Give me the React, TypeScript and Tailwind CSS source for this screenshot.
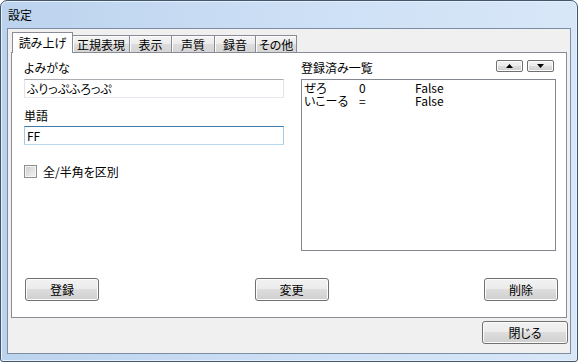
import React from 'react';

const font = { fontFamily: '"Noto Sans CJK JP", "Noto Sans", sans-serif' };

const Btn: React.FC<{ label: string; className?: string }> = ({ label, className = '' }) => (
  <div
    className={`flex h-[23px] items-center justify-center rounded-[3px] border border-[#707070] bg-[linear-gradient(to_bottom,#f2f2f2_0%,#ebebeb_50%,#dddddd_50%,#cfcfcf_100%)] text-[12px] leading-none text-black shadow-[inset_0_0_0_1px_#fcfcfc] ${className}`}
  >
    {label}
  </div>
);

const ArrowBtn: React.FC<{ up?: boolean }> = ({ up }) => (
  <div className="flex h-[12px] w-[27px] items-center justify-center rounded-[2px] border border-[#707070] bg-[linear-gradient(to_bottom,#f2f2f2_0%,#ebebeb_50%,#dddddd_50%,#cfcfcf_100%)] shadow-[inset_0_0_0_1px_#fcfcfc]">
    <svg width="7" height="4" viewBox="0 0 7 4">
      {up ? <polygon points="3.5,0 7,4 0,4" fill="#000" /> : <polygon points="0,0 7,0 3.5,4" fill="#000" />}
    </svg>
  </div>
);

const tabs = [
  { label: '正規表現', w: 'w-[57px]' },
  { label: '表示', w: 'w-[42px]' },
  { label: '声質', w: 'w-[43px]' },
  { label: '録音', w: 'w-[41px]' },
  { label: 'その他', w: 'w-[41px]' },
];

const rows = [
  ['ぜろ', '0', 'False'],
  ['いこーる', '=', 'False'],
];

export default function App() {
  return (
    <div className="h-[362px] w-[578px] bg-white text-black [font-feature-settings:'palt']" style={font}>
      <div className="flex h-[362px] w-[578px] flex-col rounded-t-[7px] rounded-b-[3px] border border-[#44566d] bg-[linear-gradient(to_right,#bcd3ee,#cfe1f6_60%,#d8e7f8)] shadow-[inset_0_0_0_1px_#e6f0fb]">
        {/* Title bar */}
        <div className="flex h-[27px] items-center pl-[7px] text-[12px] leading-none">設定</div>

        {/* Client */}
        <div className="mx-[6px] mb-[7px] flex flex-1 flex-col border border-[#7d8ea3] bg-[#f0f0f0] pt-[3px] pb-[9px]">
          {/* Tab strip */}
          <div className="relative z-10 ml-[4px] flex h-[20px] items-end">
            <div className="mb-[-1px] flex h-[21px] w-[61px] items-start justify-center border-x border-t border-[#898c95] bg-white pt-[4px] text-[12px] leading-none">
              読み上げ
            </div>
            {tabs.map(t => (
              <div
                key={t.label}
                className={`flex h-[17px] ${t.w} items-center justify-center border-t border-r border-[#898c95] bg-[linear-gradient(to_bottom,#f5f5f5_0%,#ebebeb_50%,#dddddd_50%,#d5d5d5_100%)] pt-[1px] text-[12px] leading-none shadow-[inset_1px_1px_0_#fcfcfc]`}
              >
                {t.label}
              </div>
            ))}
          </div>

          {/* Tab panel */}
          <div className="mx-[3px] flex h-[266px] flex-col border border-[#898c95] bg-white pt-[7px] pb-[16px]">
            <div className="flex flex-1 pl-[12px] pr-[10px]">
              {/* Left column */}
              <div className="flex w-[260px] flex-col">
                <div className="h-[16px] text-[12px] leading-[16px]">よみがな</div>
                <div className="mt-[3px] flex h-[19px] items-center border border-[#abadb3] border-x-[#e2e3ea] border-b-[#e3e9ef] pl-[2px] text-[12px] leading-none">
                  ふりっぷふろっぷ
                </div>
                <div className="mt-[10px] h-[16px] text-[12px] leading-[16px]">単語</div>
                <div className="mt-[2px] flex h-[19px] items-center border border-[#3d7bad] border-x-[#a4c9e3] border-b-[#b7d9ed] pl-[2px] text-[12px] leading-none">
                  FF
                </div>
                <div className="mt-[20px] flex items-center gap-[6px]">
                  <div className="h-[13px] w-[13px] border border-[#8e8f8f] bg-[linear-gradient(135deg,#cbcbcb,#f6f6f6)] shadow-[inset_0_0_0_1px_#f4f4f4]" />
                  <span className="text-[12px] leading-none">全/半角を区別</span>
                </div>
              </div>

              {/* Right column */}
              <div className="ml-[17px] flex w-[255px] flex-col">
                <div className="flex h-[16px] items-start justify-between">
                  <span className="text-[12px] leading-[16px]">登録済み一覧</span>
                  <div className="mr-[2px] flex gap-[4px]">
                    <ArrowBtn up />
                    <ArrowBtn />
                  </div>
                </div>
                <div className="mt-[3px] h-[172px] border border-[#828790] pt-[1px] pl-[2px]">
                  {rows.map(r => (
                    <div key={r[0]} className="flex h-[13px] items-center text-[12px] leading-none">
                      <span className="w-[55px]">{r[0]}</span>
                      <span className="w-[56px]">{r[1]}</span>
                      <span>{r[2]}</span>
                    </div>
                  ))}
                </div>
              </div>
            </div>

            {/* Action buttons */}
            <div className="flex justify-between pl-[13px] pr-[8px]">
              <Btn label="登録" className="w-[74px]" />
              <Btn label="変更" className="w-[74px]" />
              <Btn label="削除" className="w-[74px]" />
            </div>
          </div>

          <div className="mt-[3px] flex justify-end pr-[2px]">
            <Btn label="閉じる" className="w-[86px]" />
          </div>
        </div>
      </div>
    </div>
  );
}
